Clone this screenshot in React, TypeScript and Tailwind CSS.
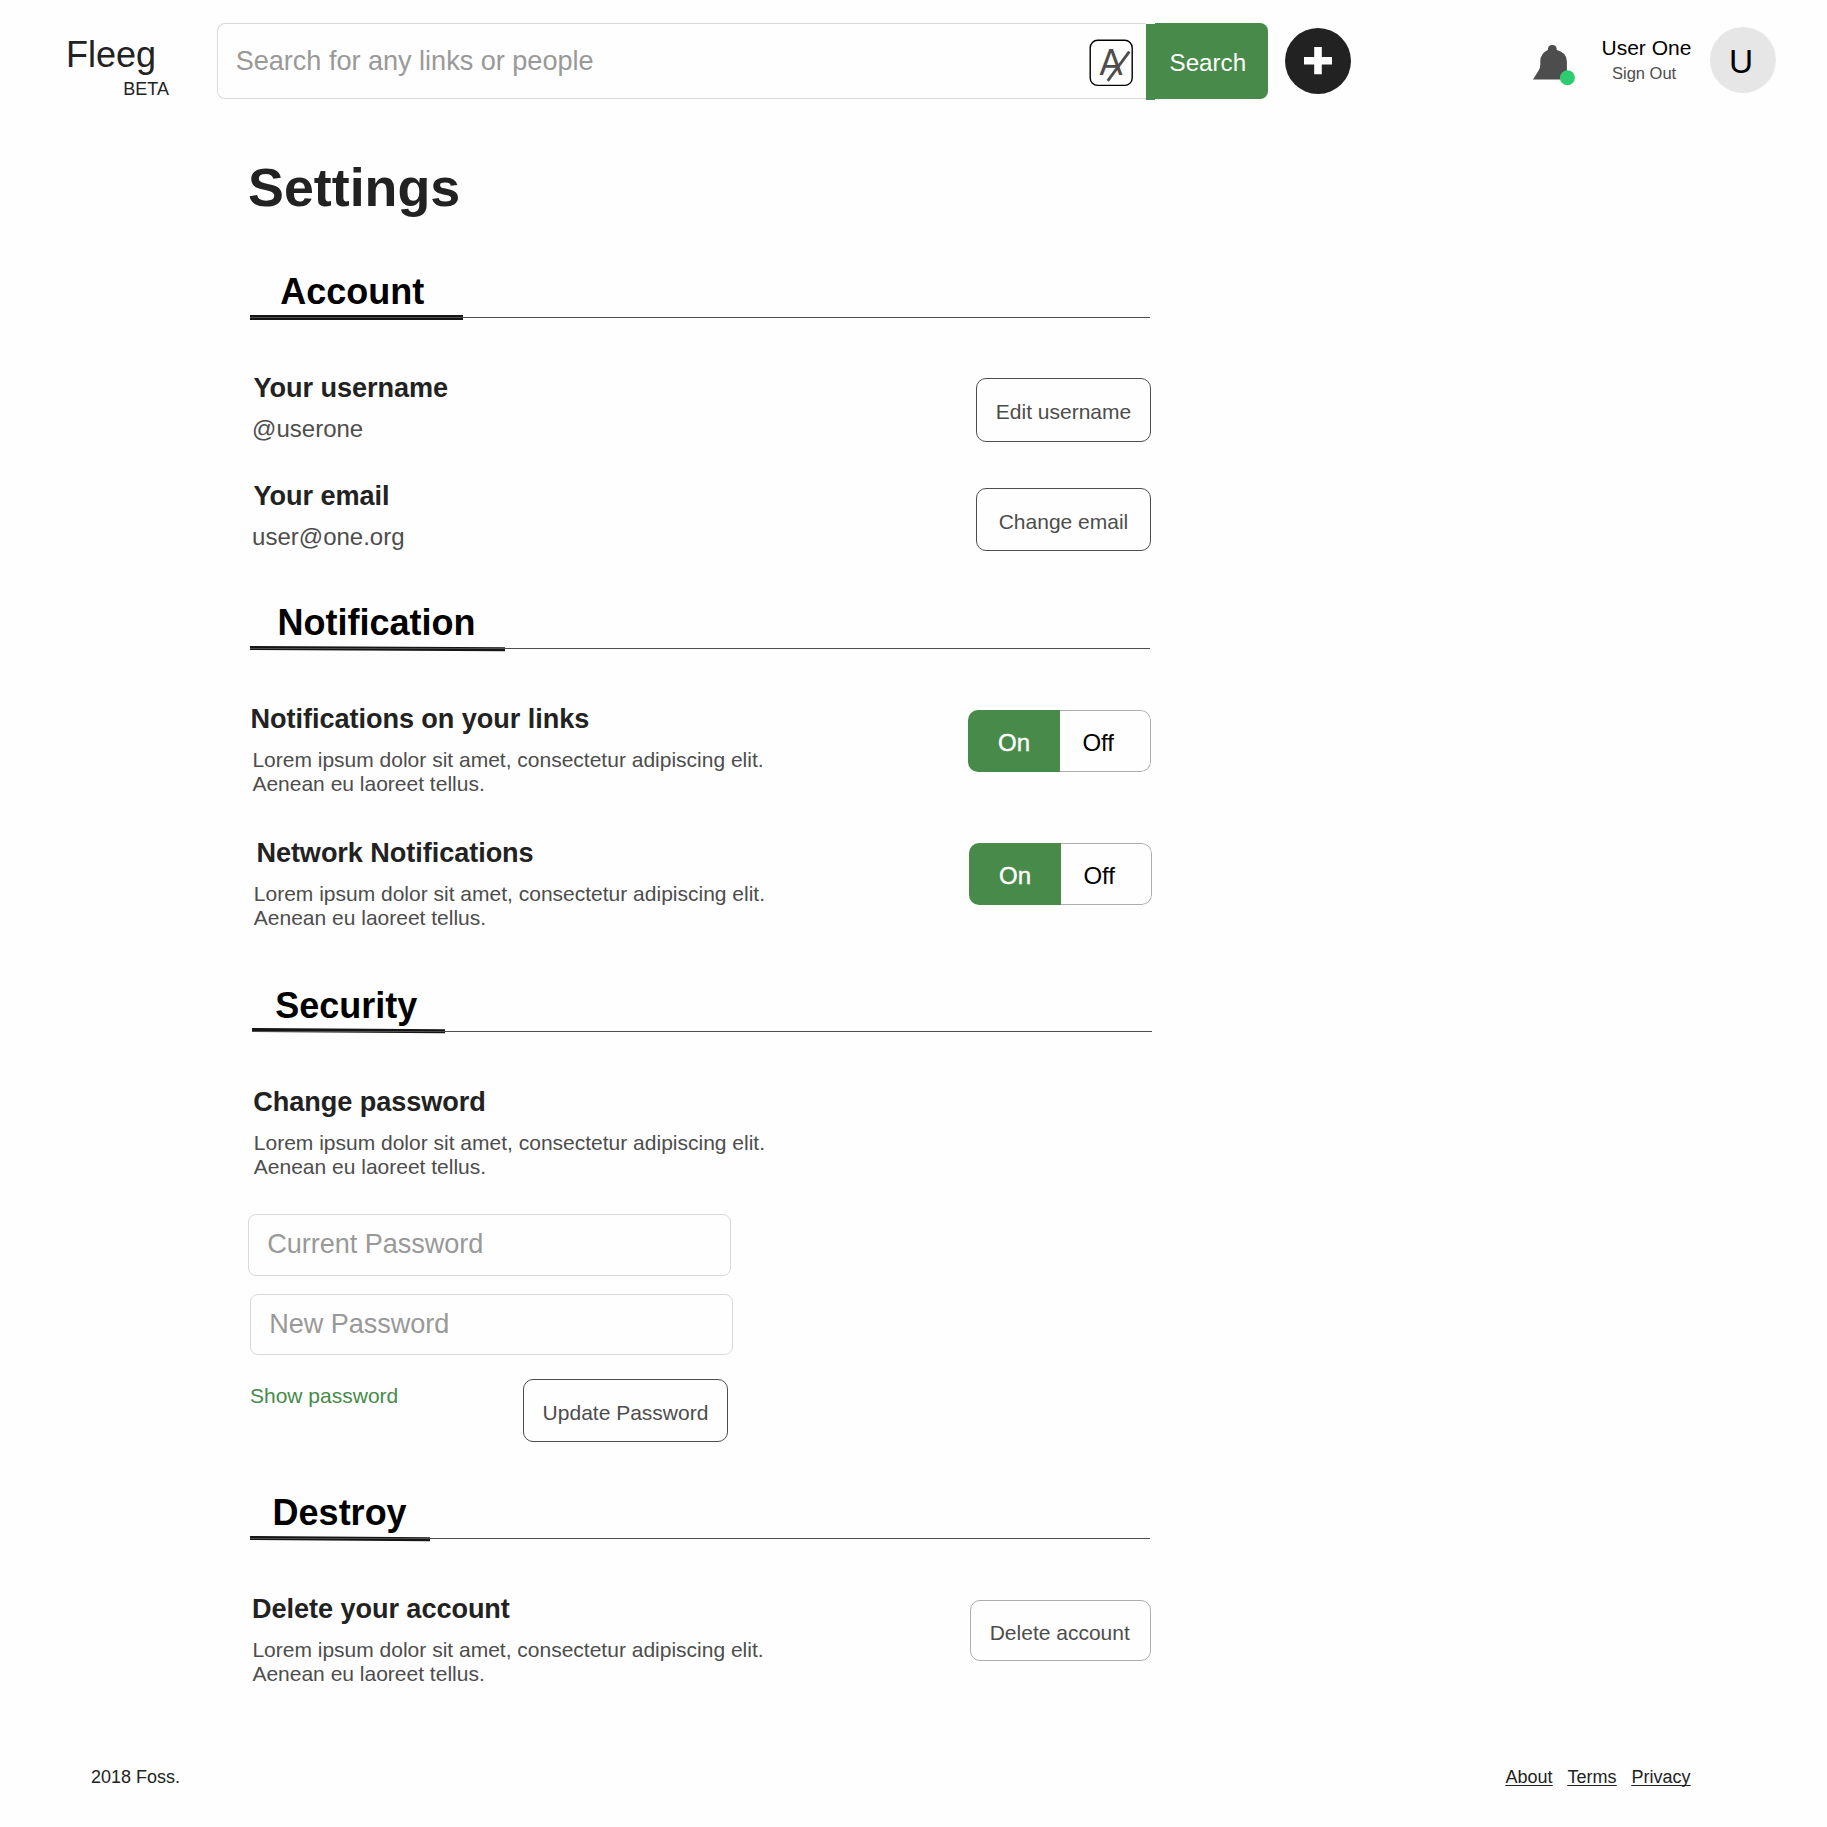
import type { ReactNode } from "react";

const LOREM = "Lorem ipsum dolor sit amet, consectetur adipiscing elit.";
const LOREM_END = "Aenean eu laoreet tellus.";

function Heading({ children, indent, tab, shift = "" }: { children: ReactNode; indent: string; tab: string; shift?: string }) {
  return (
    <div className={`w-[900px] ${shift}`}>
      <h2 className={`text-[36px] leading-[41px] font-bold text-black ${indent}`}>{children}</h2>
      <div className="relative h-[8px]">
        <div className={`absolute left-0 h-[4px] origin-left bg-[#151515] ${tab}`} />
        <div className="absolute left-0 top-[5px] h-px w-full bg-[#4d4d4d]" />
      </div>
    </div>
  );
}

function Label({ children, className = "" }: { children: ReactNode; className?: string }) {
  return <h3 className={`text-[27.1px] leading-[31px] font-bold tracking-[-0.06px] text-[#222] ${className}`}>{children}</h3>;
}

function Value({ children }: { children: ReactNode }) {
  return <p className="mt-3 ml-[2.1px] text-[24px] leading-[27px] text-[#4d4d4d]">{children}</p>;
}

function Description({ className = "" }: { className?: string }) {
  return (
    <p className={`mt-[14px] text-[21px] leading-[24px] text-[#4d4d4d] ${className}`}>
      {LOREM}
      <br />
      {LOREM_END}
    </p>
  );
}

function OutlineButton({ children, className = "" }: { children: ReactNode; className?: string }) {
  return (
    <button className={`flex justify-center rounded-[10px] border text-[21px] leading-[23px] whitespace-nowrap text-[#4d4d4d] ${className}`}>
      {children}
    </button>
  );
}

function Toggle({ className = "" }: { className?: string }) {
  return (
    <div className={`flex w-[183px] overflow-hidden rounded-[10px] text-[24px] leading-[27px] ${className}`}>
      <button className="flex w-[92px] items-center bg-[#478a49] pt-[3px] pl-[30px] text-white [-webkit-text-stroke:0.4px_white]">On</button>
      <button className="flex flex-1 items-center rounded-r-[10px] border border-l-0 border-[#adadad] pt-[3px] pl-[22.4px] text-black">Off</button>
    </div>
  );
}

function PasswordInput({ placeholder, className = "" }: { placeholder: string; className?: string }) {
  return (
    <input
      placeholder={placeholder}
      className={`block w-[483px] rounded-[8px] border border-[#d9d9d9] pl-[18.3px] text-[27.1px] leading-[31px] tracking-[-0.06px] placeholder:text-[#999] ${className}`}
    />
  );
}

function Header() {
  return (
    <header className="flex h-[157px] items-start">
      <div className="w-[217px] pt-[34px] pl-[66px] text-[#222]">
        <div className="text-[36px] leading-[41px]">Fleeg</div>
        <div className="mt-1 ml-[57.3px] text-[18px] leading-[20px]">BETA</div>
      </div>

      <div className="mt-[23px] flex h-[76px] w-[1051px]">
        <div className="flex flex-1 rounded-l-[8px] border border-r-0 border-[#d9d9d9]">
          <input
            placeholder="Search for any links or people"
            className="mt-[20px] ml-[17.7px] h-[33px] w-[700px] text-[27.1px] leading-[31px] tracking-[-0.02px] placeholder:text-[#999]"
          />
          <svg className="mt-[15px] ml-auto mr-[12px]" width="45" height="48" viewBox="0 0 45 48">
            <rect x="1.2" y="1.2" width="42" height="45.2" rx="7.5" fill="none" stroke="#000" strokeWidth="1.4" />
            <text transform="translate(10.4 35.6) scale(0.92 1)" fontSize="37.5" fill="#4d4d4d" fontFamily="Liberation Sans, sans-serif">
              A
            </text>
            <path d="M18.7 41.8 40.3 12.6" stroke="#4d4d4d" strokeWidth="2.8" />
          </svg>
        </div>
        <div className="mt-px h-[76px] w-[9px] bg-[#478a49]" />
        <button className="flex h-[76px] w-[113px] items-start rounded-r-[8px] bg-[#478a49] pt-[26px] pl-[14.5px] text-[24.2px] leading-[27px] text-white">
          Search
        </button>
      </div>

      <button className="mt-[28px] ml-[17px] flex size-[66px] items-center justify-center rounded-full bg-[#222]">
        <svg width="28" height="28" viewBox="0 0 28 28" fill="#fff">
          <path d="M10.2 0h7.6v10.1H28v7.4H17.8v9.7h-7.6v-9.7H0v-7.4h10.2z" />
        </svg>
      </button>

      <svg className="mt-[44px] ml-[181px]" width="44" height="42" viewBox="0 0 44 42">
        <path
          d="M1 35.4 6.6 26.6Q8.3 23.8 8.3 20.5V17.2Q8.3 9.2 15.8 5.9Q15.8 1 20.3 1T24.8 5.9Q34.9 8.6 34.9 17.2V26.6L40 35.4Z"
          fill="#4d4d4d"
        />
        <circle cx="35.4" cy="33.7" r="7.5" fill="#2ecc71" />
      </svg>

      <div className="mt-[36px] ml-[25.5px] w-[108.5px]">
        <div className="text-[21px] leading-[23px] text-black">User One</div>
        <div className="mt-[5px] ml-[10.5px] text-[16.5px] leading-[19px] text-[#4d4d4d]">Sign Out</div>
      </div>

      <div className="mt-[27px] flex size-[66px] justify-center rounded-full bg-[#e6e6e6] pt-[16px] pr-[4px] text-[33.4px] leading-[37px] text-black">
        U
      </div>
    </header>
  );
}

export default function App() {
  return (
    <div className="flex h-[1827px] w-[1827px] flex-col overflow-hidden bg-[#fefefe] font-['Liberation_Sans',Arial,sans-serif]">
      <Header />

      <main className="w-[1152px] pl-[250px]">
        <h1 className="-ml-[2px] h-[114px] text-[53.8px] leading-[61px] font-bold text-[#222]">Settings</h1>

        <section className="h-[331px]">
          <Heading indent="pl-[30.2px]" tab="top-[3px] h-[5px] w-[213px]">Account</Heading>
          <div className="mt-[52px] flex h-[108px] justify-between">
            <div>
              <Label className="ml-[3.5px]">Your username</Label>
              <Value>@userone</Value>
            </div>
            <OutlineButton className="mt-[6px] mr-[1px] h-[64px] w-[175px] border-[#4d4d4d] pt-[21px]">Edit username</OutlineButton>
          </div>
          <div className="flex justify-between">
            <div>
              <Label className="ml-[3.5px]">Your email</Label>
              <Value>user@one.org</Value>
            </div>
            <OutlineButton className="mt-[8px] mr-[1px] h-[63px] w-[175px] border-[#4d4d4d] pt-[21px]">Change email</OutlineButton>
          </div>
        </section>

        <section className="h-[383px]">
          <Heading indent="pl-[27.6px]" tab="top-[3px] w-[255px] skew-y-[0.3deg]">Notification</Heading>
          <div className="mt-[52px] flex h-[134px] justify-between">
            <div>
              <Label className="ml-[0.6px]">Notifications on your links</Label>
              <Description className="ml-[2.4px]" />
            </div>
            <Toggle className="mt-[7px] mr-[1px] h-[62px]" />
          </div>
          <div className="flex justify-between">
            <div>
              <Label className="ml-[6.4px]">Network Notifications</Label>
              <Description className="ml-[3.8px]" />
            </div>
            <Toggle className="mt-[6px] h-[62px]" />
          </div>
        </section>

        <section className="h-[507px]">
          <Heading indent="pl-[23.2px]" tab="top-[2px] w-[193px] skew-y-[0.4deg]" shift="ml-[2px]">Security</Heading>
          <div className="mt-[52px]">
            <Label className="ml-[3.2px]">Change password</Label>
            <Description className="ml-[3.8px]" />
          </div>
          <PasswordInput placeholder="Current Password" className="mt-[35px] -ml-[2px] h-[62px] pb-[3px]" />
          <PasswordInput placeholder="New Password" className="mt-[18px] h-[61px] pb-[1px]" />
          <div className="mt-[24px] flex w-[478px] justify-between">
            <a className="mt-[5px] text-[21px] leading-[23px] text-[#478a49]">Show password</a>
            <OutlineButton className="h-[63px] w-[205px] border-[#4d4d4d] pt-[21px]">Update Password</OutlineButton>
          </div>
        </section>

        <section className="h-[275px]">
          <Heading indent="pl-[22.6px]" tab="top-[3px] w-[180px] skew-y-[0.4deg]">Destroy</Heading>
          <div className="mt-[52px] flex justify-between">
            <div>
              <Label className="ml-[2px]">Delete your account</Label>
              <Description className="ml-[2.4px]" />
            </div>
            <OutlineButton className="mt-[7px] mr-[1px] h-[61px] w-[181px] border-[#adadad] pt-[20px] pr-[1.5px]">Delete account</OutlineButton>
          </div>
        </section>
      </main>

      <footer className="flex justify-between pr-[136.5px] pl-[91px] text-[18px] leading-[20px] text-[#222]">
        <span>2018 Foss.</span>
        <nav className="flex gap-[15px] underline decoration-1 underline-offset-2 [text-decoration-skip-ink:none]">
          <a>About</a>
          <a>Terms</a>
          <a>Privacy</a>
        </nav>
      </footer>
    </div>
  );
}
